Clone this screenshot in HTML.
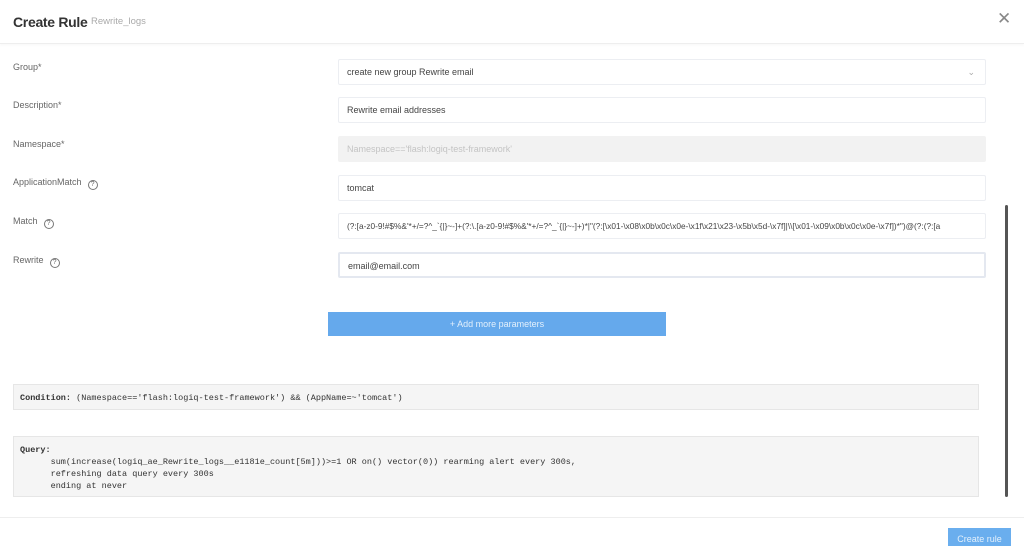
<!DOCTYPE html>
<html><head><style>
*{box-sizing:border-box;margin:0;padding:0}
body{width:1024px;height:546px;background:#fff;font-family:"Liberation Sans",sans-serif;position:relative;overflow:hidden;color:#555}
.hdr{position:absolute;left:0;top:0;width:1024px;height:44px;border-bottom:1px solid #eee;box-shadow:0 1px 3px rgba(0,0,0,.04)}
.title{position:absolute;left:13px;top:14px;font-size:14px;font-weight:bold;color:#333;letter-spacing:-0.3px}
.sub{position:absolute;left:92px;top:16px;font-size:9.5px;color:#aaa}
.x{position:absolute;left:997px;top:9px;font-size:17px;color:#888}
.lbl{position:absolute;left:13px;font-size:9px;color:#666}
.q{display:inline-block;width:10px;height:10px;border:1px solid #777;border-radius:50%;font-size:7px;text-align:center;line-height:8px;margin-left:6px;vertical-align:-1px}
.in{position:absolute;left:338px;width:648px;height:26px;border:1px solid #eceef2;border-radius:2px;font-size:9px;color:#444;padding-left:8px;line-height:24px;white-space:nowrap;overflow:hidden}
.btn{position:absolute;left:328px;top:312px;width:338px;height:24px;background:#65a9ec;color:#e3f0fc;font-size:9px;text-align:center;line-height:24px}
.box{position:absolute;left:13px;width:966px;background:#f5f5f5;border:1px solid #e6e6e6;font-family:"Liberation Mono",monospace;font-size:8.5px;color:#333}
.sb{position:absolute;left:1005px;top:205px;width:3px;height:292px;background:#555;border-radius:2px}
.foot{position:absolute;left:0;top:517px;width:1024px;border-top:1px solid #eee}
.cr{position:absolute;left:948px;top:528px;width:63px;height:18px;background:#6aaeee;color:#e3f0fc;font-size:9px;text-align:center;line-height:22px}
</style></head><body>
<div class="hdr"><div class="title">Create Rule</div><div class="sub" style="left:91px">Rewrite_logs</div><div class="x">✕</div></div>
<div class="lbl" style="top:62px">Group*</div>
<div class="lbl" style="top:100px">Description*</div>
<div class="lbl" style="top:139px">Namespace*</div>
<div class="lbl" style="top:177px">ApplicationMatch<span class="q">?</span></div>
<div class="lbl" style="top:216px">Match<span class="q">?</span></div>
<div class="lbl" style="top:255px">Rewrite<span class="q">?</span></div>
<div class="in" style="top:59px">create new group Rewrite email<span style="position:absolute;right:10px;color:#aaa">⌄</span></div>
<div class="in" style="top:97px">Rewrite email addresses</div>
<div class="in" style="top:136px;background:#f2f2f2;color:#c4c4c4;border-color:#f2f2f2">Namespace=='flash:logiq-test-framework'</div>
<div class="in" style="top:175px">tomcat</div>
<div class="in" style="top:213px;font-size:8.3px">(?:[a-z0-9!#$%&amp;'*+/=?^_`{|}~-]+(?:\.[a-z0-9!#$%&amp;'*+/=?^_`{|}~-]+)*|"(?:[\x01-\x08\x0b\x0c\x0e-\x1f\x21\x23-\x5b\x5d-\x7f]|\\[\x01-\x09\x0b\x0c\x0e-\x7f])*")@(?:(?:[a</div>
<div class="in" style="top:252px;border:2px solid #e4e8f0">email@email.com</div>
<div class="btn">+ Add more parameters</div>
<div class="box" style="top:384px;height:26px;padding:8px 6px"><b>Condition:</b> (Namespace=='flash:logiq-test-framework') &amp;&amp; (AppName=~'tomcat')</div>
<div class="box" style="top:436px;height:61px;padding:7px 6px;line-height:12px"><b>Query:</b><br>&nbsp;&nbsp;&nbsp;&nbsp;&nbsp;&nbsp;sum(increase(logiq_ae_Rewrite_logs__e1181e_count[5m]))&gt;=1 OR on() vector(0)) rearming alert every 300s,<br>&nbsp;&nbsp;&nbsp;&nbsp;&nbsp;&nbsp;refreshing data query every 300s<br>&nbsp;&nbsp;&nbsp;&nbsp;&nbsp;&nbsp;ending at never</div>
<div class="sb"></div>
<div class="foot"></div>
<div class="cr">Create rule</div>
</body></html>
